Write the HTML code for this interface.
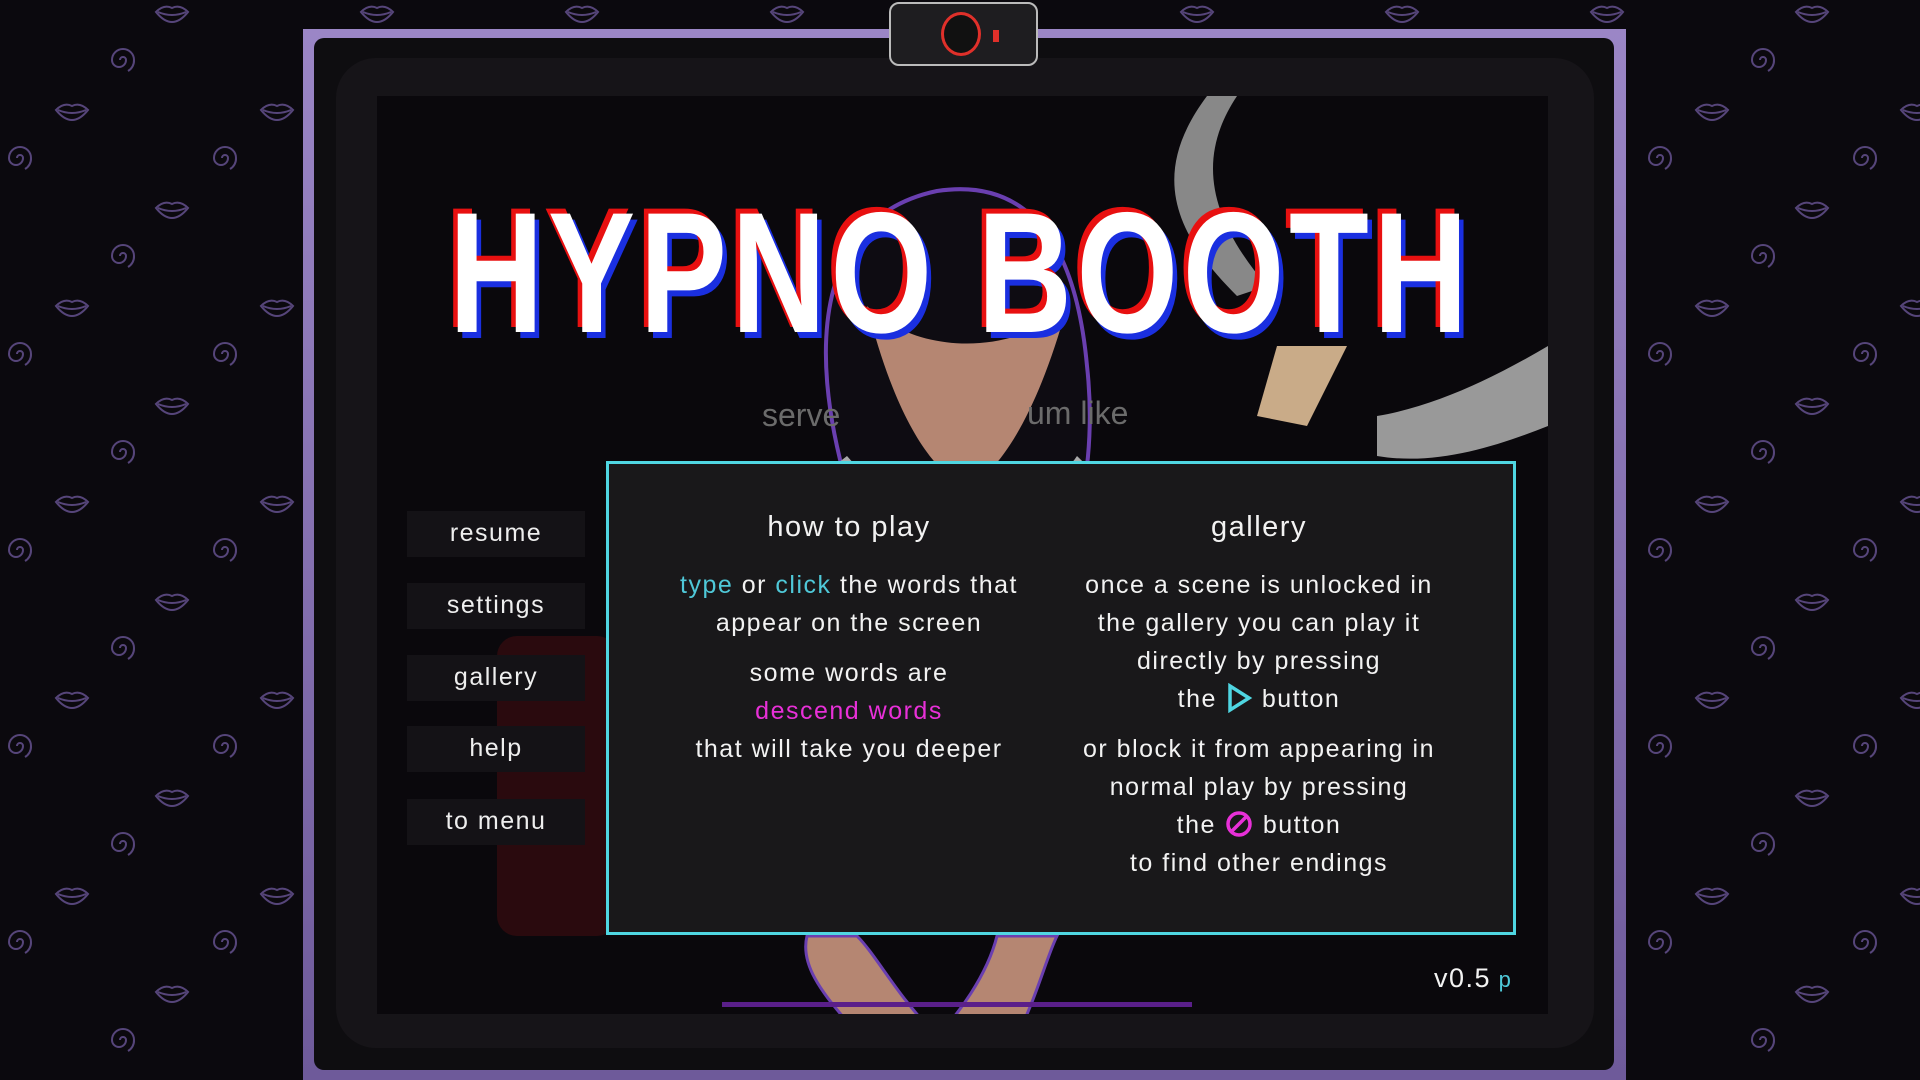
<!DOCTYPE html>
<html><head><meta charset="utf-8"><style>
*{margin:0;padding:0;box-sizing:border-box}
body{width:1920px;height:1080px;overflow:hidden;background:#0b090e;font-family:"Liberation Sans","DejaVu Sans",sans-serif;position:relative}
.abs{position:absolute}
.txt{color:#f2f2f2;font-size:25px;letter-spacing:1.5px;text-align:center;white-space:nowrap}
.btn{position:absolute;left:407px;width:178px;height:46px;background:#141216;color:#eee;font-size:25px;letter-spacing:1.5px;text-align:center;line-height:44px}
</style></head><body>
<svg class="abs" style="left:0;top:0" width="1920" height="1080">
<defs>
<pattern id="p" width="205" height="196" patternUnits="userSpaceOnUse">
<g fill="none" stroke="#56457a" stroke-width="2">
<g id="sp"><path d="M123 60 m-3 0 a3 3 0 1 1 6 0 a7 7 0 1 1 -14 0 a11 11 0 1 1 22 0 a12 12 0 0 1 -6 11"/></g>
<use href="#sp" x="-103" y="98"/><use href="#sp" x="102" y="98"/><use href="#sp" x="0" y="196"/><use href="#sp" x="-103" y="-98"/><use href="#sp" x="102" y="-98"/>
<g id="lp"><path d="M156 12 q8 -8 16 -4 q8 -4 16 4 q-8 10 -16 10 q-8 0 -16 -10z M158 12 q14 6 28 0"/></g>
<use href="#lp" x="-100" y="98"/><use href="#lp" x="104" y="98"/><use href="#lp" x="0" y="196"/>
</g></pattern></defs>
<rect width="1920" height="1080" fill="url(#p)"/>
</svg>
<!-- bezel -->
<div class="abs" style="left:303px;top:29px;width:1323px;height:1051px;background:linear-gradient(#9b86c6,#6e5a9a);"></div>
<div class="abs" style="left:314px;top:38px;width:1300px;height:1032px;background:#0e0d10;border-radius:10px"></div>
<div class="abs" style="left:336px;top:58px;width:1258px;height:990px;background:#161418;border-radius:40px"></div>
<!-- screen -->
<div class="abs" style="left:377px;top:96px;width:1171px;height:918px;background:#0a080c;overflow:hidden">
<svg width="1171" height="918">
<path d="M470 390 C430 250 440 120 560 95 C660 80 700 160 710 270 C720 360 700 420 700 430 L470 430Z" fill="#0e0c12" stroke="#6a3fb0" stroke-width="4"/>
<path d="M490 210 C520 330 560 380 590 390 C620 380 660 320 690 210 C640 260 540 260 490 210Z" fill="#b58672"/>
<path d="M470 360 C420 400 380 420 330 460 L820 460 C780 420 740 400 700 360 C660 420 520 420 470 360Z" fill="#aaa"/>
<path d="M830 0 C770 80 800 140 860 200 L890 190 C830 120 820 60 860 0Z" fill="#888"/>
<path d="M900 250 L970 250 L930 330 L880 320Z" fill="#c9ab88"/>
<path d="M1000 320 C1060 310 1120 280 1171 250 L1171 330 C1120 350 1060 370 1000 360Z" fill="#999"/>
<text x="385" y="330" fill="#6b6b6b" font-size="32" font-family="Liberation Sans">serve</text>
<text x="650" y="328" fill="#6b6b6b" font-size="32" font-family="Liberation Sans">um like</text>
<path d="M430 840 C420 880 470 920 480 940 L560 940 C520 900 500 860 480 840Z" fill="#b58672" stroke="#6a3fb0" stroke-width="3"/>
<path d="M620 840 C610 880 580 920 560 940 L640 940 C660 900 670 860 680 840Z" fill="#b58672" stroke="#6a3fb0" stroke-width="3"/>
<rect x="345" y="906" width="470" height="5" fill="#5a1f8a"/>
<rect x="120" y="540" width="120" height="300" fill="#2a0a0e" rx="20"/>
</svg>
</div>
<!-- webcam -->
<div class="abs" style="left:889px;top:2px;width:149px;height:64px;background:#1e1d20;border:2px solid #bbb;border-radius:10px"></div>
<div class="abs" style="left:941px;top:12px;width:40px;height:44px;border:3px solid #e0302a;border-radius:50%;background:#111"></div>
<div class="abs" style="left:993px;top:30px;width:6px;height:12px;background:#e0302a"></div>
<!-- title -->
<div class="abs" style="left:449px;top:187px;white-space:nowrap;font-family:'Liberation Sans',sans-serif;font-weight:bold;font-size:172px;line-height:1;letter-spacing:6px;color:#fff;transform-origin:0 0;transform:scaleX(0.76);text-shadow:-6px -5px 0 #e81010,6px 6px 0 #1a2fe0">HYPNO BOOTH</div>
<!-- menu -->
<div class="btn" style="top:511px">resume</div>
<div class="btn" style="top:583px">settings</div>
<div class="btn" style="top:655px">gallery</div>
<div class="btn" style="top:726px">help</div>
<div class="btn" style="top:799px">to menu</div>
<!-- dialog -->
<div class="abs" style="left:606px;top:461px;width:910px;height:474px;background:#19181a;border:3px solid #4fd6e2"></div>
<div class="abs txt" style="left:649px;width:400px;top:511px;font-size:29px">how to play</div>
<div class="abs txt" style="left:1059px;width:400px;top:511px;font-size:29px">gallery</div>
<div class="abs txt" style="left:649px;width:400px;top:566px;line-height:38px"><span style="color:#4fc8d8">type</span> or <span style="color:#4fc8d8">click</span> the words that<br>appear on the screen</div>
<div class="abs txt" style="left:649px;width:400px;top:654px;line-height:38px">some words are<br><span style="color:#e830d8">descend words</span><br>that will take you deeper</div>
<div class="abs txt" style="left:1059px;width:400px;top:566px;line-height:38px">once a scene is unlocked in<br>the gallery you can play it<br>directly by pressing<br>the <svg width="28" height="30" style="vertical-align:-6px"><path d="M5 3 L24 15 L5 27Z" fill="none" stroke="#4fd6e2" stroke-width="3.5"/></svg> button</div>
<div class="abs txt" style="left:1059px;width:400px;top:730px;line-height:38px">or block it from appearing in<br>normal play by pressing<br>the <svg width="30" height="30" style="vertical-align:-6px"><circle cx="15" cy="15" r="11" fill="none" stroke="#e830d8" stroke-width="3.5"/><path d="M8 22 L22 8" stroke="#e830d8" stroke-width="3.5"/></svg> button<br>to find other endings</div>
<div class="abs txt" style="left:1434px;top:963px;font-size:27px;text-align:left">v0.5<span style="color:#4fc8d8;font-size:22px"> p</span></div>
</body></html>
